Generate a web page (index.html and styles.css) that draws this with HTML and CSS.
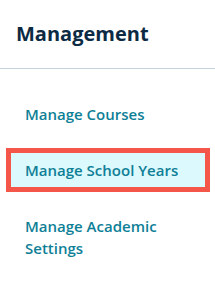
FILE: index.html
```html
<!DOCTYPE html>
<html lang="en">
<head>
  <meta charset="UTF-8">
  <meta name="viewport" content="width=device-width, initial-scale=1.0">
  <title>Management</title>
  <link rel="stylesheet" href="styles.css">
</head>
<body>
  <aside class="sidebar">
    <h2 class="sidebar-title">Management</h2>
    <ul class="menu">
      <li><a href="#" class="menu-link">Manage Courses</a></li>
      <li><a href="#" class="menu-link selected">Manage School Years</a></li>
      <li><a href="#" class="menu-link">Manage Academic Settings</a></li>
    </ul>
  </aside>
</body>
</html>
```
FILE: styles.css
```css
body {
  margin: 0;
  font-family: 'Open Sans', sans-serif;
  background-color: #ffffff;
}
.sidebar {
  width: 215px;
}
.sidebar-title {
  margin: 0;
  padding: 20px 16px;
  font-size: 20px;
  line-height: 28px;
  font-weight: 700;
  color: #0d2a44;
  border-bottom: 1px solid #c6d4de;
}
.menu {
  list-style: none;
  margin: 0;
  padding: 23px 5px 0 6px;
  display: flex;
  flex-direction: column;
  gap: 12px;
}
.menu-link {
  display: block;
  padding: 6px 14px;
  border: 5px solid transparent;
  font-size: 15px;
  line-height: 22px;
  font-weight: 600;
  color: #0f7f97;
  text-decoration: none;
}
.menu-link.selected {
  background-color: #dcf9fd;
  border-color: #f4574a;
}
```
